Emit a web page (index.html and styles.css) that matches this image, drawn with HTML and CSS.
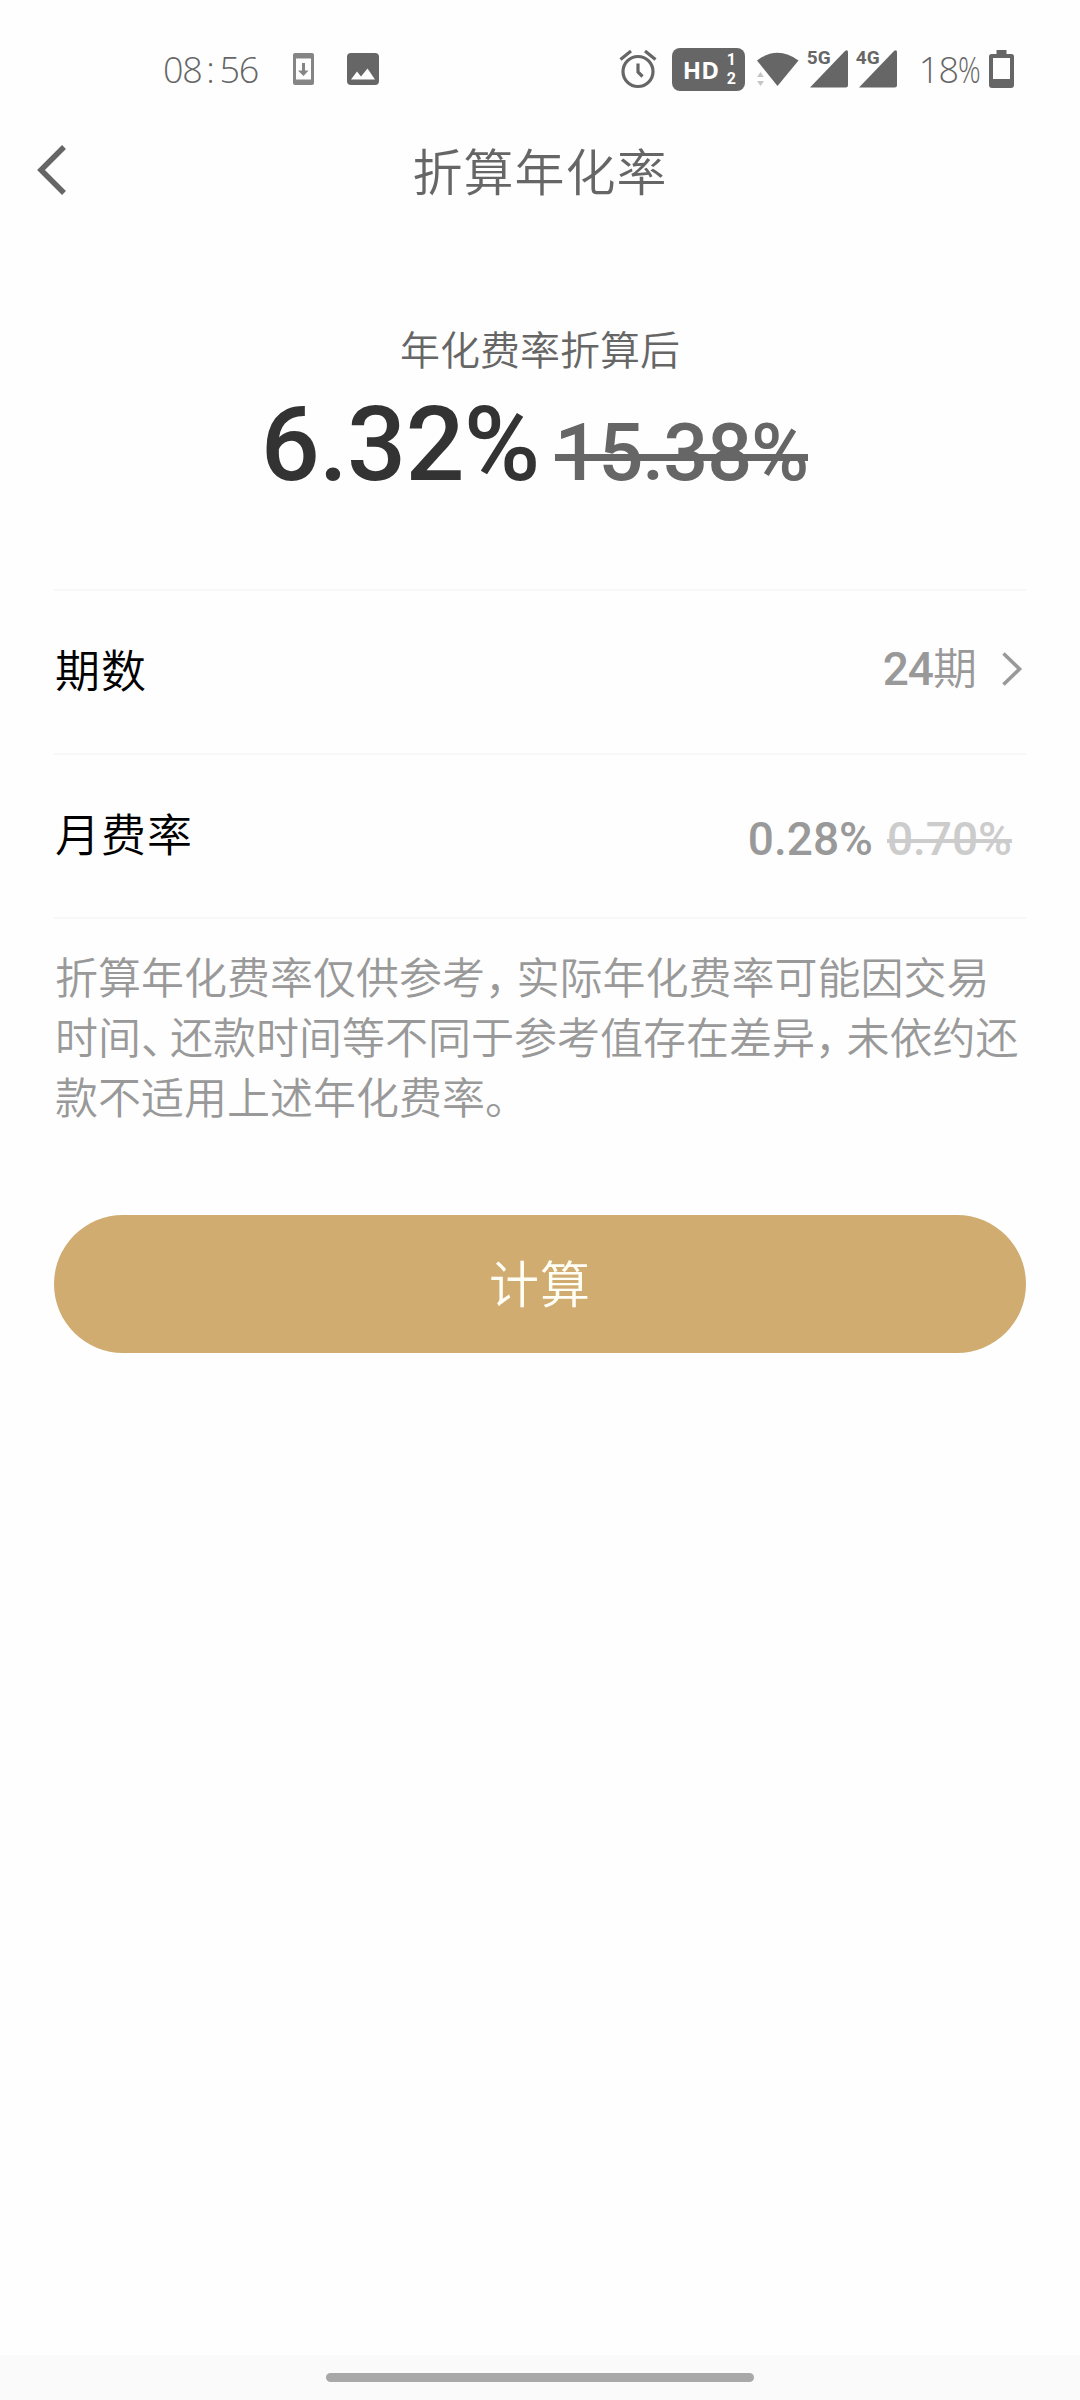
FILE: index.html
```html
<!DOCTYPE html>
<html lang="zh-CN">
<head>
<meta charset="utf-8">
<title>折算年化率</title>
<link rel="stylesheet" href="styles.css">
</head>
<body>
<div class="screen">
  <div class="status">
    <span class="clock">08<span class="colon">:</span>56</span>
    <svg class="ic-download" width="21" height="32" viewBox="0 0 21 32"><path fill="#858585" fill-rule="evenodd" d="M2 0H19Q21 0 21 2V30Q21 32 19 32H2Q0 32 0 30V2Q0 0 2 0ZM3 5.500V26.500H18V5.500Z"/><path fill="#858585" d="M9 10h3v7.500h3.500L10.500 23 5 17.500H9z"/></svg>
    <svg class="ic-image" width="32" height="32" viewBox="0 0 32 32"><rect width="32" height="32" rx="4" fill="#666"/><path fill="#fefefe" d="M4 26.500 10 18.500 14 23.500 20.500 15.500 28 26.500z"/></svg>
    <span class="spacer"></span>
    <svg class="ic-alarm" width="38" height="40" viewBox="0 0 38 40" fill="none" stroke="#666" stroke-width="3.200"><circle cx="19" cy="22.500" r="15"/><path d="M1.500 10.500 12 2M26 2l10.500 8.500"/><path d="M19 14.500V23l4.500 4.500"/></svg>
    <div class="hd"><span class="hd-label">HD</span><span class="hd-sims"><span>1</span><span>2</span></span></div>
    <svg class="ic-wifi" width="43" height="36" viewBox="0 0 43 36"><path fill="#666" d="M1 9.500Q21.500-6 42.500 9.500L21.500 35z"/><path fill="#c6c6c6" d="M1 26 4.500 21 8 26zM1 30H8L4.500 35z"/></svg>
    <div class="signal"><svg width="38" height="38" viewBox="0 0 38 38"><path fill="#666" d="M0 37.500 35 1Q38-1 38 2.500V35Q38 37.500 35.500 37.500z"/></svg><span class="net">5G</span></div>
    <div class="signal"><svg width="38" height="38" viewBox="0 0 38 38"><path fill="#666" d="M0 37.500 35 1Q38-1 38 2.500V35Q38 37.500 35.500 37.500z"/></svg><span class="net">4G</span></div>
    <span class="level">18<span class="pct">%</span></span>
    <svg class="ic-battery" width="25" height="38" viewBox="0 0 25 38"><path fill="#666" fill-rule="evenodd" d="M7.500 0H17.500V4H22.500Q25 4 25 6.500V35Q25 38 22 38H3Q0 38 0 35V6.500Q0 4 2.500 4H7.500zM4 8V29H21V8z"/></svg>
  </div>

  <div class="navbar">
    <svg class="back" width="32" height="50" viewBox="0 0 32 50" fill="none" stroke="#666" stroke-width="5.500"><path d="M28 2 5 25 28 48"/></svg>
    <h1 class="title">折算年化率</h1>
  </div>

  <div class="hero">
    <div class="caption">年化费率折算后</div>
    <div class="rates"><span class="rate">6.32%</span><span class="old-rate">15.38%</span></div>
  </div>

  <div class="list">
    <div class="row">
      <span class="label">期数</span>
      <span class="value"><span class="num">24</span><span class="unit">期</span></span>
      <svg class="chevron" width="22" height="36" viewBox="0 0 22 36" fill="none" stroke="#999" stroke-width="3.600"><path d="M2.500 2.500 18.500 18 2.500 33.500"/></svg>
    </div>
    <div class="row row-fee">
      <span class="label">月费率</span>
      <span class="value num">0.28%</span>
      <span class="old-fee num">0.70%</span>
    </div>
  </div>

  <p class="note">折算年化费率仅供参考<span class="comma">，</span>实际年化费率可能因交易<br>时间<span class="pause">、</span>还款时间等不同于参考值存在差异<span class="comma">，</span>未依约还<br>款不适用上述年化费率。</p>

  <button class="submit">计算</button>

  <div class="gesture"><div class="handle"></div></div>
</div>
</body>
</html>
```

FILE: styles.css
```css
* { box-sizing: border-box; }
body {
  margin: 0;
  background: #fefefe;
  font-family: "Noto Sans CJK SC", sans-serif;
  font-weight: 350;
  color: #666;
}
.screen {
  width: 1080px;
  height: 2400px;
  display: flex;
  flex-direction: column;
}
svg { display: block; flex: none; }

/* status bar */
.status {
  height: 110px;
  padding: 28px 66px 0 163px;
  display: flex;
  align-items: center;
}
.clock, .level {
  font: 300 36px/44px "Open Sans", sans-serif;
  letter-spacing: -1.4px;
  white-space: nowrap;
  padding-top: 2px;
}
.colon { padding: 0 6px 0 5px; }
.ic-download { margin-left: 35px; }
.ic-image { margin-left: 33px; }
.spacer { flex: 1; }
.hd {
  width: 73px;
  height: 43px;
  margin-left: 15px;
  padding: 0 9px 0 11px;
  border-radius: 8px;
  background: #666;
  color: #fefefe;
  display: flex;
  align-items: center;
  justify-content: space-between;
  font-family: "Open Sans", sans-serif;
  font-weight: 700;
}
.hd-label { font-size: 24px; line-height: 43px; }
.hd-sims {
  display: flex;
  flex-direction: column;
  font: 700 16px/19px Roboto, sans-serif;
}
.ic-wifi { margin-left: 11px; }
.signal { position: relative; margin-left: 11px; }
.net {
  position: absolute;
  left: -3px;
  top: -2px;
  font: 700 19px/19px Roboto, sans-serif;
}
.level { margin-left: 22px; letter-spacing: -1px; }
.pct {
  display: inline-block;
  transform: scaleX(0.78);
  transform-origin: left;
  margin-right: -8px;
}
.ic-battery { margin-left: 11px; }

/* title bar */
.navbar {
  height: 120px;
  display: grid;
  grid-template-columns: 100px 1fr 100px;
  align-items: center;
}
.back { margin-left: 36px; }
.title {
  margin: 0 0 2px;
  text-align: center;
  font-size: 50px;
  line-height: 60px;
  letter-spacing: 1px;
  font-weight: 350;
}

/* headline rates */
.hero { height: 359px; padding-top: 90px; }
.caption {
  text-align: center;
  font-size: 40px;
  line-height: 56px;
}
.rates {
  display: flex;
  justify-content: center;
  align-items: baseline;
  gap: 15px;
  margin-top: 9px;
  padding-right: 11px;
  font-family: Roboto, sans-serif;
  line-height: 120px;
  font-weight: 500;
}
.rate { font-size: 104px; color: #333; letter-spacing: -0.8px; }
.old-rate { position: relative; font-size: 79px; line-height: 80px; letter-spacing: -1px; }
.old-rate::after, .old-fee::after {
  content: "";
  position: absolute;
  left: 0;
  right: 0;
  background: currentColor;
}
.old-rate::after { top: 41px; height: 7px; }

/* detail rows */
.list { margin: 0 54px; border-top: 2px solid #f8f8f8; }
.row {
  height: 164px;
  padding-bottom: 6px;
  border-bottom: 2px solid #f8f8f8;
  display: flex;
  align-items: center;
}
.label {
  flex: 1;
  font-size: 45px;
  line-height: 60px;
  letter-spacing: 1px;
  color: #000;
  padding-left: 1px;
}
.value { color: #999; display: flex; align-items: baseline; margin-bottom: 4px; }
.num {
  font: 500 46px/60px Roboto, sans-serif;
  letter-spacing: -1px;
}
.unit { font-size: 44px; line-height: 60px; }
.chevron { margin: 0 3px 0 24px; }
.row-fee .num { letter-spacing: 0; margin-top: 12px; margin-bottom: 0; }
.row-fee .old-fee { position: relative; color: #ccc; margin-left: 14px; margin-right: 14px; }
.old-fee::after { top: 30px; height: 4px; }

.note {
  margin: 26px 54px 0;
  padding-left: 1px;
  font-size: 43px;
  line-height: 60px;
  white-space: nowrap;
  color: #999;
}
.comma { letter-spacing: -11.5px; }
.pause { letter-spacing: -14px; }

.submit {
  margin: 90px 54px 0;
  height: 138px;
  padding: 0 0 6px;
  border: 0;
  border-radius: 69px;
  background: #d0ac70;
  color: #fffef5;
  font: 350 50px/60px "Noto Sans CJK SC", sans-serif;
  letter-spacing: 1px;
}

/* gesture bar */
.gesture {
  margin-top: auto;
  height: 45px;
  padding-top: 18px;
  background: #fafafa;
}
.handle {
  width: 428px;
  height: 9px;
  margin: 0 auto;
  border-radius: 5px;
  background: #a8a8a8;
}
```
